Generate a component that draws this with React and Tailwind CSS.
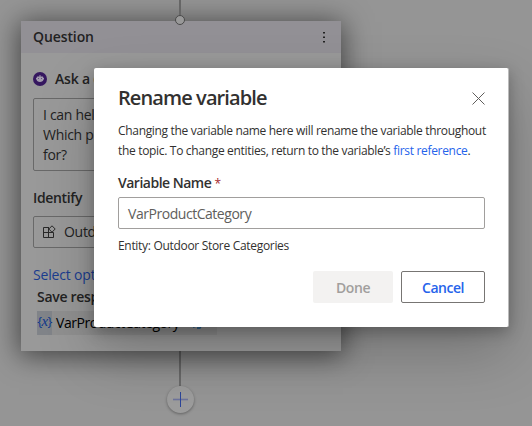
import React from "react";

function QuestionCard() {
  return (
    <section className="relative h-[330px] w-[320px] bg-[#999999] shadow-[0_3px_26px_2px_rgba(0,0,0,0.55)]">
      <header className="flex h-8 items-center justify-between bg-[#929095] pl-3 pr-[14px]">
        <h2 className="text-[14px] font-semibold leading-5 tracking-[-0.1px]">Question</h2>
        <svg width="6" height="14" viewBox="0 0 6 14" fill="#222">
          <rect x="2" y="2" width="2" height="1.5" />
          <rect x="2" y="6.5" width="2" height="1.5" />
          <rect x="2" y="11" width="2" height="1.5" />
        </svg>
      </header>
      <div className="flex flex-col items-start px-3 pt-4">
        <div className="flex h-5 items-center gap-2">
          <svg width="14" height="14" viewBox="0 0 14 14">
            <circle cx="7" cy="7" r="7" fill="#35175f" />
            <path d="M6.5 3h1v1.500h2c.5 0 .8.300.8.800v.7h.7v1.500h-.7v.3c0 1.300-1.400 2.200-3.300 2.200s-3.300-.9-3.300-2.200v-.3H3V6h.7v-.7c0-.5.3-.8.8-.8h2z" fill="#a29bad" />
            <path d="M5.200 6.200h.8v.8h-.8zM8 6.200h.8v.8H8z" fill="#35175f" />
          </svg>
          <h3 className="whitespace-nowrap text-[14px] font-semibold leading-5 tracking-[-0.2px]">Ask a question</h3>
        </div>
        <div className="mt-[9px] h-[73px] w-[296px] rounded-[2px] border border-[#696969] px-[9px] pt-[6px] text-[14px] leading-5 tracking-[-0.3px]">
          I can hel<br />Which p<br />for?
        </div>
        <h3 className="mt-[17px] text-[14px] font-semibold leading-5 tracking-[-0.35px]">Identify</h3>
        <div className="mt-[8px] flex h-8 w-[296px] items-center gap-2 rounded-[2px] border border-[#696969] px-2 text-[14px] leading-5 tracking-[-0.3px]">
          <svg width="14" height="14" viewBox="0 0 14 14" fill="none" stroke="#292929">
            <path d="M7 2.500H1.500v10h10v-5M1.500 7.500h10M6.500 2.500v10" />
            <path d="M10 .8 13.200 4 10 7.200 6.800 4z" />
          </svg>
          Outdoor
        </div>
        <a className="mt-[17px] text-[14px] leading-5 tracking-[-0.18px] text-[#1b3d8f]">Select options</a>
        <h3 className="ml-1 mt-[2px] text-[14px] font-semibold leading-5 tracking-[-0.3px]">Save response as</h3>
        <div className="ml-1 mt-1 flex h-6 w-[180px] items-center bg-[#909090]">
          <span className="flex h-6 w-[15px] shrink-0 items-center justify-center bg-[#818489] pb-[3px] text-[13px] font-medium tracking-[-0.6px] text-[#10388c]">
            {"{"}<i className="font-['Liberation_Serif',serif] text-[15px]">x</i>{"}"}
          </span>
          <span className="ml-[4px] text-[14px] leading-5 tracking-[-0.45px] text-black">VarProductCategory</span>
          <svg className="ml-auto mr-[13px] mt-[2px]" width="12" height="12" viewBox="0 0 12 12" fill="none" stroke="#17568a" strokeWidth="1.3">
            <path d="m2 9 1-3 5-5 2 2-5 5zM5 10h3l2-3" />
          </svg>
        </div>
      </div>
    </section>
  );
}

function RenameDialog() {
  return (
    <div className="absolute left-[94px] top-[68px] flex h-[259px] w-[415px] flex-col rounded-[2px] border-r border-[#bbb] bg-white pl-6 pr-[23px] text-[#323130] shadow-[0_25.6px_57.6px_0_rgba(0,0,0,0.22),0_4.8px_14.4px_0_rgba(0,0,0,0.26)]">
      <div className="mt-[16px] flex h-7 items-center justify-between">
        <h1 className="text-[20px] font-semibold leading-7 tracking-[-0.9px]">Rename variable</h1>
        <svg width="13" height="13" viewBox="0 0 13 13" fill="none" stroke="#605e5c">
          <path d="m.5.5 12 12M12.500.5l-12 12" />
        </svg>
      </div>
      <p className="mt-[9px] whitespace-nowrap text-[12px] leading-5 tracking-[-0.32px]">
        Changing the variable name here will rename the variable throughout
        <br />
        the topic. To change entities, return to the variable’s <a className="text-[#2563eb]">first reference</a>.
      </p>
      <label className="mt-[12px] h-5 text-[14px] font-semibold leading-5 tracking-[-0.5px]">
        Variable Name <span className="text-[12px] font-normal text-[#a4262c]">*</span>
      </label>
      <div className="mt-[4px] flex h-8 w-[367px] items-center rounded-[2px] border border-[#a19f9d] px-[9px] text-[14px] tracking-[-0.46px] text-[#605e5c]">
        VarProductCategory
      </div>
      <p className="mt-[8px] text-[12px] leading-[18px] tracking-[-0.31px]">Entity: Outdoor Store Categories</p>
      <div className="mt-[16px] flex justify-end gap-2">
        <button className="h-8 w-20 rounded-[2px] bg-[#f3f2f1] text-[14px] font-semibold tracking-[-0.4px] text-[#a19f9d]">Done</button>
        <button className="h-8 w-[84px] rounded-[2px] border border-[#777573] text-[14px] font-semibold tracking-[-0.5px] text-[#2563eb]">Cancel</button>
      </div>
    </div>
  );
}

export default function App() {
  return (
    <main className="relative h-[426px] w-[532px] overflow-hidden bg-[#959595] font-['Open_Sans','Noto_Sans',sans-serif] text-[#222]">
      <div className="ml-[21px] flex w-[320px] flex-col items-center pt-[21px]">
        <QuestionCard />
        <div className="mr-[2px] h-[35px] w-[2px] bg-[#6b6b6b]" />
        <div className="mr-[1px] flex h-[27px] w-[27px] items-center justify-center rounded-full bg-[#9c9c9c] shadow-[0_1px_3px_rgba(0,0,0,0.35)]">
          <svg width="15" height="15" viewBox="0 0 15 15">
            <path d="M0 7.500h15" stroke="#6c729c" strokeWidth="1.6" />
            <path d="M7.500 0v15" stroke="#2c4599" />
          </svg>
        </div>
      </div>
      <div className="absolute left-[175px] top-0 flex w-[10px] flex-col items-center">
        <div className="h-[15px] w-[2px] bg-[#666]" />
        <div className="h-[10px] w-[10px] rounded-full border border-[#4a4a4a] bg-[#999]" />
      </div>
      <RenameDialog />
    </main>
  );
}
